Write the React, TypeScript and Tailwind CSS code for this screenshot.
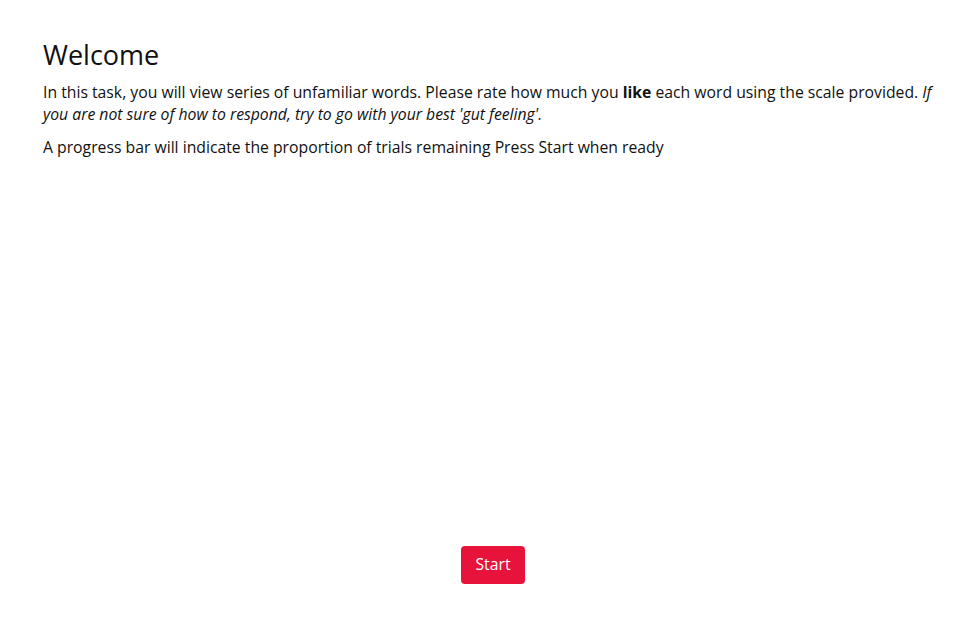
export default function App() {
  return (
    <main
      className="flex h-[623px] w-full flex-col bg-white text-[#111111]"
      style={{ fontFamily: '"Open Sans", "Liberation Sans", sans-serif' }}
    >
      <div className="ml-[43px] w-[900px] pt-[36px]">
        <h1 className="text-[27px] leading-[37px] font-normal">Welcome</h1>
        <p className="mt-[8px] text-[15.75px] leading-[22px]">
          In this task, you will view series of unfamiliar words. Please rate how much you{" "}
          <b className="font-bold">like</b> each word using the scale provided.{" "}
          <i>If you are not sure of how to respond, try to go with your best 'gut feeling'.</i>
        </p>
        <p className="mt-[11px] text-[15.75px] leading-[22px]">
          A progress bar will indicate the proportion of trials remaining Press Start when ready
        </p>
      </div>
      <div className="ml-[43px] mt-auto mb-[39px] flex w-[900px] justify-center">
        <button className="h-[38px] w-[64px] rounded-[4px] bg-[#e8133a] text-[15.75px] text-white">
          Start
        </button>
      </div>
    </main>
  );
}
